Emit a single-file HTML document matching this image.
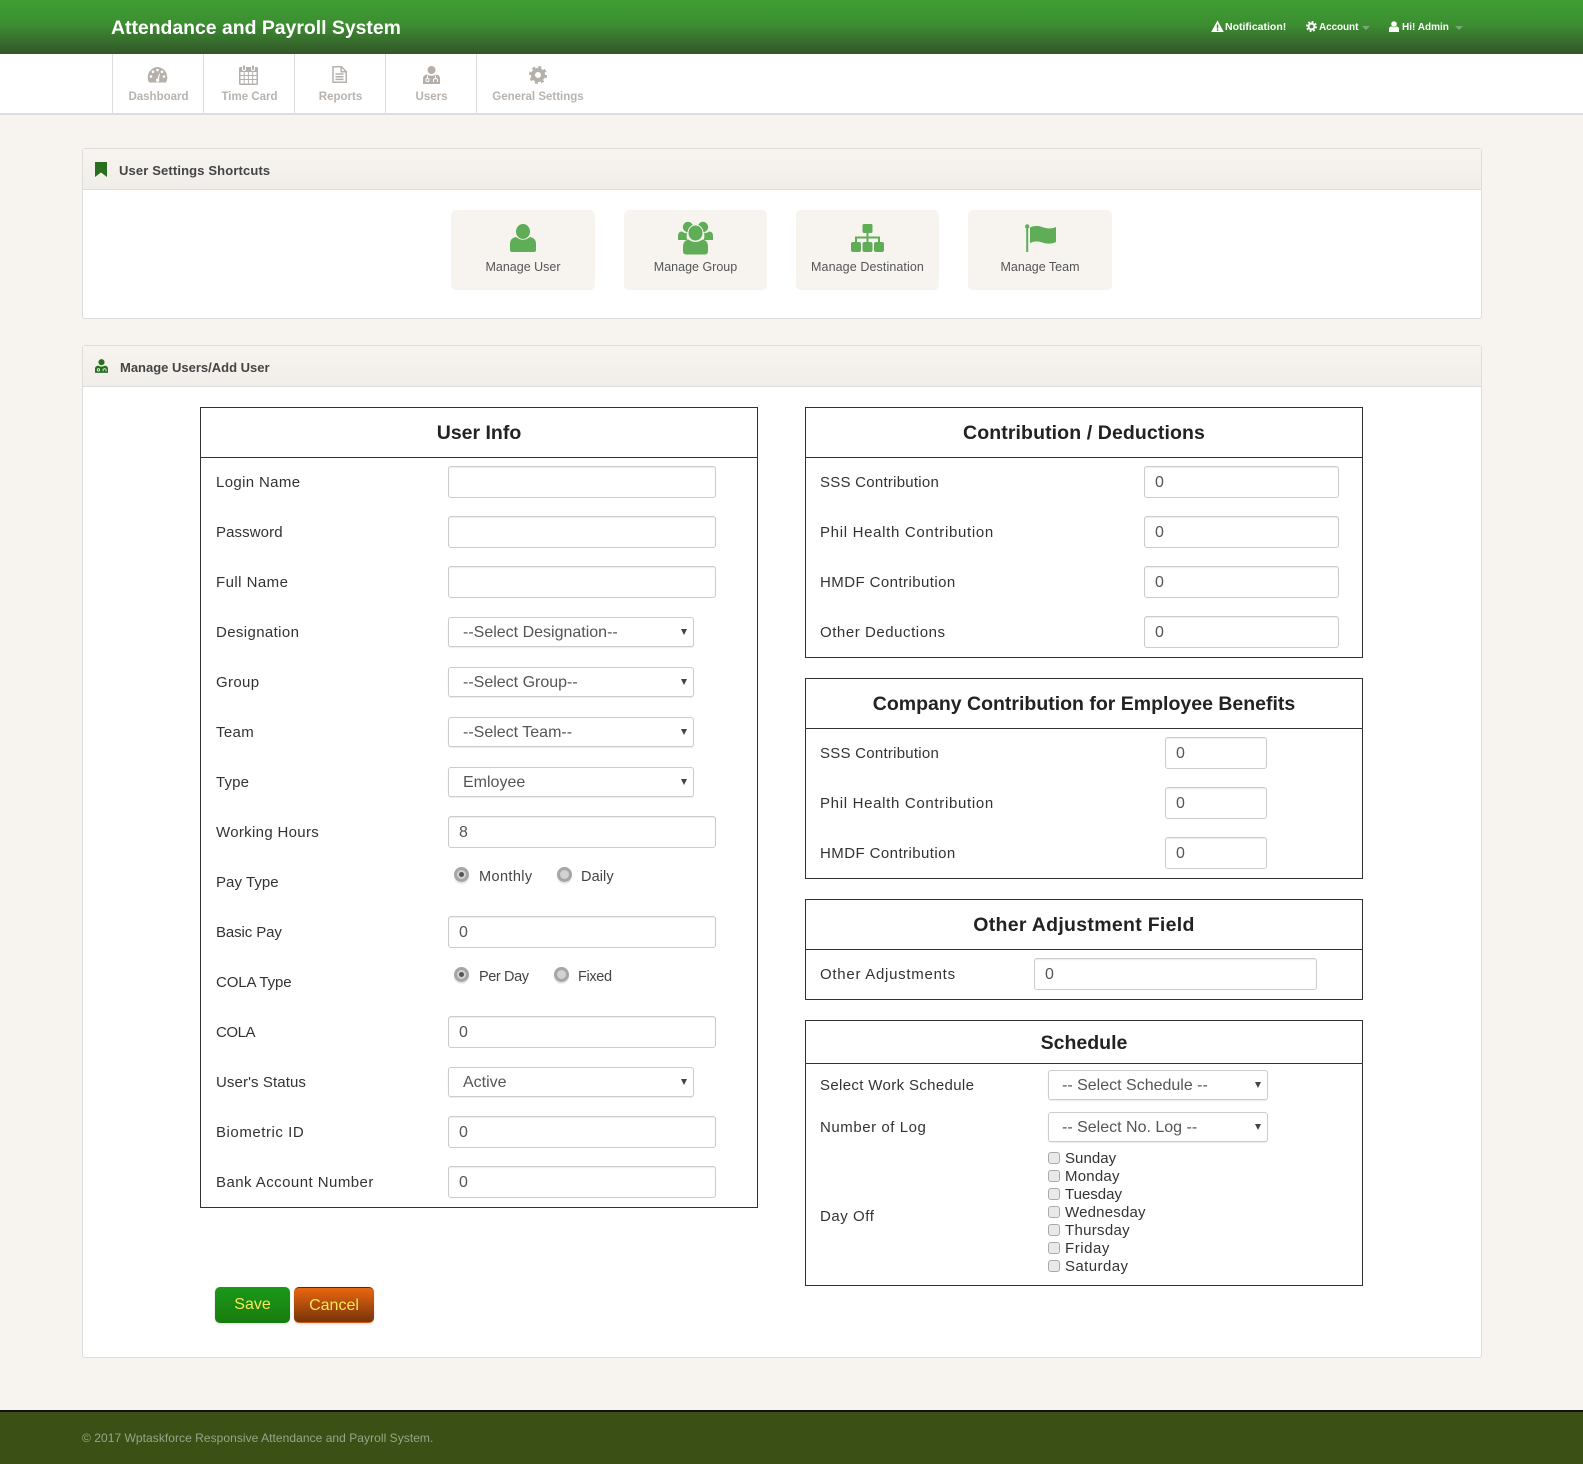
<!DOCTYPE html>
<html><head><meta charset="utf-8"><title>Attendance and Payroll System</title>
<style>
*{box-sizing:border-box}
html,body{margin:0;padding:0}
body{width:1583px;height:1464px;position:relative;overflow:hidden;background:#f7f4f0;font-family:"Liberation Sans",sans-serif;color:#333}
.a{position:absolute}
.hd{left:0;top:0;width:1583px;height:54px;background:linear-gradient(#3f9f33,#3c8e31 45%,#33552a)}
.title{left:111px;top:13px;line-height:30px;font-size:19.4px;font-weight:bold;color:#fff;white-space:nowrap}
.tn{top:17px;line-height:20px;font-size:10px;font-weight:bold;color:#fff;white-space:nowrap}
.nav{left:0;top:54px;width:1583px;height:61px;background:#fff;border-bottom:2px solid #ddd}
.sep{top:54px;width:1px;height:60px;background:#ddd}
.nl{top:87px;line-height:20px;font-size:11.5px;font-weight:bold;color:#b8b3ae;text-align:center;width:91px}
.panel{left:82px;width:1400px;background:#fff;border:1px solid #ddd;border-radius:3px}
.ph{left:83px;width:1398px;background:linear-gradient(#f7f4f0,#f1eeea);border-bottom:1px solid #ddd}
.pt{line-height:20px;font-size:13px;font-weight:bold;color:#444;white-space:nowrap}
.tile{top:210px;height:80px;background:#f7f4f0;border-radius:5px}
.tl{top:257px;line-height:20px;font-size:12.5px;color:#555;text-align:center;white-space:nowrap}
.box{background:#fff;border:1px solid #333}
.bl{height:1px;background:#333}
.bt{line-height:30px;font-size:19.5px;color:#222;text-align:center;font-weight:bold;white-space:nowrap}
.l{line-height:20px;font-size:15px;color:#333;white-space:nowrap;margin-top:1px}
input.i{position:absolute;height:32px;border:1px solid #ccc;border-radius:3px;background:#fff;box-shadow:inset 0 1px 1px rgba(0,0,0,.075);padding:2px 10px 0;font:16px "Liberation Sans",sans-serif;color:#555;margin:0;outline:0}
select.s{position:absolute;height:30px;border:1px solid #ccc;border-radius:3px;background:#fff;padding:0 0 0 14px;font:16px "Liberation Sans",sans-serif;color:#555;margin:0;outline:0;box-shadow:0 1px 1px rgba(0,0,0,.08);appearance:none;-webkit-appearance:none}
select.t{padding-left:13px}
.ar{width:6px;height:6px;background:#444;clip-path:polygon(0 0,100% 0,50% 100%);margin-top:1px}
.r{width:15px;height:15px;border-radius:50%;background:#d2d2d2;border:3px solid #a6a6a6;box-shadow:0 2px 1px #e4e4e4}
.r.on:after{content:"";position:absolute;left:2px;top:2px;width:5px;height:5px;border-radius:50%;background:#555}
.rl{font-size:14.5px;color:#444}
.c{left:1048px;width:12px;height:12px;border-radius:3px;background:#e9e9e9;border:1px solid #aaa}
.btn{top:1287px;height:36px;border-radius:5px;line-height:35px;text-align:center;font-size:16px;color:#f6e85a;box-shadow:0 1px 2px rgba(0,0,0,.15)}
.ft{left:0;top:1410px;width:1583px;height:54px;background:#3a5014;border-top:2px solid #111}
.ftt{left:82px;top:1428px;line-height:20px;font-size:12px;color:#98a48a;white-space:nowrap;letter-spacing:.05px}
svg{position:absolute;display:block}
</style></head><body>

<div class="a hd"></div>
<div class="a title">Attendance and Payroll System</div>

<svg style="left:1211px;top:20px" width="13" height="13" viewBox="0 0 13 13"><path fill="#fff" d="M6.5 .5 L12.8 12 H.2 Z"/><rect x="5.8" y="4.5" width="1.5" height="4" fill="#3a8a30"/><rect x="5.8" y="9.3" width="1.5" height="1.5" fill="#3a8a30"/></svg>
<div class="a tn" style="left:1225px;font-size:10.5px">Notification!</div>
<svg style="left:1306px;top:21px" width="11" height="11" viewBox="0 0 12 12"><circle cx="6" cy="6" r="3.2" fill="none" stroke="#fff" stroke-width="2.2"/><circle cx="6" cy="6" r="5" fill="none" stroke="#fff" stroke-width="2" stroke-dasharray="2 1.93"/></svg>
<div class="a tn" style="left:1319px;top:17.5px;letter-spacing:-.1px">Account</div>
<svg style="left:1362px;top:26px" width="8" height="4"><path d="M0 0H8L4 4Z" fill="#7fa67a"/></svg>
<svg style="left:1389px;top:21px" width="10" height="11" viewBox="0 0 10 11"><circle cx="5" cy="3" r="2.8" fill="#fff"/><path fill="#fff" d="M0 11V8Q0 5.8 2.2 5.4 5 7.2 7.8 5.4 10 5.8 10 8V11Z"/></svg>
<div class="a tn" style="left:1402px;top:17.5px">Hi! Admin</div>
<svg style="left:1455px;top:26px" width="8" height="4"><path d="M0 0H8L4 4Z" fill="#7fa67a"/></svg>

<div class="a nav"></div>
<div class="a sep" style="left:112px"></div>
<div class="a sep" style="left:203px"></div>
<div class="a sep" style="left:294px"></div>
<div class="a sep" style="left:385px"></div>
<div class="a sep" style="left:476px"></div>

<svg style="left:147px;top:67px" width="21" height="16" viewBox="0 0 21 16"><path fill="#b5b0ab" d="M10.5 0A10.5 10.5 0 0 0 2 15.5H19A10.5 10.5 0 0 0 10.5 0Z"/><g fill="#fff"><circle cx="4" cy="9.5" r="1.3"/><circle cx="6" cy="4.8" r="1.3"/><circle cx="10.5" cy="3" r="1.3"/><circle cx="15" cy="4.8" r="1.3"/><circle cx="17" cy="9.5" r="1.3"/><path d="M10 13L12.3 6.5 12.9 6.7 11.8 13.4Z"/><circle cx="10.6" cy="13.3" r="1.7"/></g></svg>
<svg style="left:239px;top:65px" width="19" height="20" viewBox="0 0 19 20"><rect x="0" y="2" width="19" height="18" rx="1.5" fill="#b5b0ab"/><rect x="1.5" y="7" width="16" height="11.5" fill="#fff"/><g fill="#b5b0ab"><rect x="4.7" y="7" width="1" height="12"/><rect x="8.9" y="7" width="1" height="12"/><rect x="13.2" y="7" width="1" height="12"/><rect x="1" y="10" width="17" height="1"/><rect x="1" y="14" width="17" height="1"/></g><rect x="3.5" y="0" width="3" height="5.5" rx="1.2" fill="#b5b0ab" stroke="#fff"/><rect x="12.5" y="0" width="3" height="5.5" rx="1.2" fill="#b5b0ab" stroke="#fff"/></svg>
<svg style="left:332px;top:66px" width="15" height="17" viewBox="0 0 15 17"><path fill="none" stroke="#b5b0ab" stroke-width="1.5" d="M1 .8H9.5L14.2 5.5V16.2H1Z"/><path fill="none" stroke="#b5b0ab" stroke-width="1.5" d="M9.2 1V5.8H14M3.5 8H11.5M3.5 10.7H11.5M3.5 13.4H11.5"/></svg>
<svg style="left:423px;top:66px" width="17" height="18" viewBox="0 0 17 18"><circle cx="8.5" cy="4" r="4" fill="#b5b0ab"/><path fill="#b5b0ab" d="M0 18V12.5Q0 9 4 8.5 8.5 11 13 8.5 17 9 17 12.5V18Z"/><path fill="none" stroke="#fff" stroke-width="1" d="M4.5 9.5V12M12.5 9.5V12"/><circle cx="4.5" cy="14" r="1.6" fill="none" stroke="#fff"/><path fill="none" stroke="#fff" d="M10.5 16V13.5Q12.5 11.5 14.5 13.5V16"/></svg>
<svg style="left:529px;top:66px" width="18" height="18" viewBox="0 0 18 18"><circle cx="9" cy="9" r="5" fill="none" stroke="#b5b0ab" stroke-width="4"/><circle cx="9" cy="9" r="7.6" fill="none" stroke="#b5b0ab" stroke-width="2.8" stroke-dasharray="3 2.97"/></svg>

<div class="a nl" style="left:113px">Dashboard</div>
<div class="a nl" style="left:204px">Time Card</div>
<div class="a nl" style="left:295px">Reports</div>
<div class="a nl" style="left:386px">Users</div>
<div class="a nl" style="left:477px;width:122px">General Settings</div>

<div class="a panel" style="top:148px;height:171px"></div>
<div class="a ph" style="top:149px;height:41px"></div>
<svg style="left:95px;top:162px" width="12" height="15" viewBox="0 0 12 15"><path fill="#2a6f20" d="M0 0H12V15L6 10.5 0 15Z"/></svg>
<div class="a pt" style="left:119px;top:161px;letter-spacing:.14px">User Settings Shortcuts</div>

<div class="a tile" style="left:451px;width:144px"></div>
<div class="a tile" style="left:624px;width:143px"></div>
<div class="a tile" style="left:796px;width:143px"></div>
<div class="a tile" style="left:968px;width:144px"></div>

<svg style="left:510px;top:224px" width="26" height="28" viewBox="0 0 26 28"><ellipse cx="13" cy="7.5" rx="7" ry="7.5" fill="#5fad56"/><path fill="#5fad56" d="M0 26V20Q0 14 6 13 13 18.5 20 13 26 14 26 20V26Q26 28 24 28H2Q0 28 0 26Z"/></svg>
<svg style="left:678px;top:221px" width="35" height="34" viewBox="0 0 35 34"><circle cx="10" cy="6" r="5.2" fill="#5fad56"/><circle cx="25" cy="6" r="5.2" fill="#5fad56"/><path fill="#5fad56" d="M0 19V15Q0 10.5 4 10.5 7 13 9 11.5 8 16 9.5 19Z M35 19V15Q35 10.5 31 10.5 28 13 26 11.5 27 16 25.5 19Z"/><ellipse cx="17.5" cy="12" rx="7.5" ry="8" fill="#5fad56" stroke="#f7f4f0" stroke-width="1"/><path fill="#5fad56" d="M5 30V26Q5 19.5 10.5 18.5 17.5 23.5 24.5 18.5 30 19.5 30 26V30Q30 33.5 27 33.5H8Q5 33.5 5 30Z"/></svg>
<svg style="left:851px;top:224px" width="33" height="28" viewBox="0 0 33 28"><rect x="11.5" y="0" width="10" height="9" rx="1.5" fill="#5fad56"/><path fill="none" stroke="#5fad56" stroke-width="2" d="M16.5 8V18M5 18V13.5H28V18"/><rect x="0" y="18" width="10" height="10" rx="2" fill="#5fad56"/><rect x="11.5" y="18" width="10" height="10" rx="2" fill="#5fad56"/><rect x="23" y="18" width="10" height="10" rx="2" fill="#5fad56"/></svg>
<svg style="left:1025px;top:224px" width="32" height="28" viewBox="0 0 32 28"><rect x="1.2" y="2" width="2" height="26" fill="#5fad56"/><circle cx="2.2" cy="2.5" r="2.2" fill="#5fad56"/><path fill="#5fad56" d="M5 3.5Q11 .5 17 3 25 6 31 3V18Q25 21 17 18.5 11 16 5 19Z"/></svg>

<div class="a tl" style="left:451px;width:144px">Manage User</div>
<div class="a tl" style="left:624px;width:143px">Manage Group</div>
<div class="a tl" style="left:796px;width:143px;letter-spacing:.1px">Manage Destination</div>
<div class="a tl" style="left:968px;width:144px">Manage Team</div>

<div class="a panel" style="top:345px;height:1013px"></div>
<div class="a ph" style="top:346px;height:41px"></div>
<svg style="left:95px;top:359px" width="13" height="14" viewBox="0 0 17 18"><circle cx="8.5" cy="4" r="4" fill="#2a6f20"/><path fill="#2a6f20" d="M0 18V12.5Q0 9 4 8.5 8.5 11 13 8.5 17 9 17 12.5V18Z"/><circle cx="4.5" cy="14" r="1.6" fill="none" stroke="#fff"/><path fill="none" stroke="#fff" d="M10.5 16V13.5Q12.5 11.5 14.5 13.5V16"/></svg>
<div class="a pt" style="left:120px;top:358px">Manage Users/Add User</div>

<!-- User Info -->
<div class="a box" style="left:200px;top:407px;width:558px;height:801px"></div>
<div class="a bl" style="left:200px;top:457px;width:558px"></div>
<div class="a bt" style="left:200px;top:418px;width:558px">User Info</div>

<div class="a l" style="left:216px;top:472px;letter-spacing:.35px">Login Name</div>
<input class="i" style="left:448px;top:466px;width:268px" value="">
<div class="a l" style="left:216px;top:522px;letter-spacing:.1px">Password</div>
<input class="i" style="left:448px;top:516px;width:268px" value="">
<div class="a l" style="left:216px;top:572px;letter-spacing:.45px">Full Name</div>
<input class="i" style="left:448px;top:566px;width:268px" value="">
<div class="a l" style="left:216px;top:622px;letter-spacing:.37px">Designation</div>
<select class="s" style="left:448px;top:617px;width:246px"><option>--Select Designation--</option></select><div class="a ar" style="left:681px;top:628px"></div>
<div class="a l" style="left:216px;top:672px;letter-spacing:.35px">Group</div>
<select class="s" style="left:448px;top:667px;width:246px"><option>--Select Group--</option></select><div class="a ar" style="left:681px;top:678px"></div>
<div class="a l" style="left:216px;top:722px;letter-spacing:.35px">Team</div>
<select class="s" style="left:448px;top:717px;width:246px"><option>--Select Team--</option></select><div class="a ar" style="left:681px;top:728px"></div>
<div class="a l" style="left:216px;top:772px;letter-spacing:.15px">Type</div>
<select class="s" style="left:448px;top:767px;width:246px"><option>Emloyee</option></select><div class="a ar" style="left:681px;top:778px"></div>
<div class="a l" style="left:216px;top:822px;letter-spacing:.32px">Working Hours</div>
<input class="i" style="left:448px;top:816px;width:268px" value="8">
<div class="a l" style="left:216px;top:872px;letter-spacing:.05px">Pay Type</div>
<div class="a r on" style="left:454px;top:867px"></div>
<div class="a l rl" style="left:479px;top:866px;letter-spacing:.4px">Monthly</div>
<div class="a r" style="left:557px;top:867px"></div>
<div class="a l rl" style="left:581px;top:866px;letter-spacing:.1px">Daily</div>
<div class="a l" style="left:216px;top:922px;letter-spacing:-.1px">Basic Pay</div>
<input class="i" style="left:448px;top:916px;width:268px" value="0">
<div class="a l" style="left:216px;top:972px;letter-spacing:-.1px">COLA Type</div>
<div class="a r on" style="left:454px;top:967px"></div>
<div class="a l rl" style="left:479px;top:966px;letter-spacing:-.4px">Per Day</div>
<div class="a r" style="left:554px;top:967px"></div>
<div class="a l rl" style="left:578px;top:966px;letter-spacing:-.35px">Fixed</div>
<div class="a l" style="left:216px;top:1022px;letter-spacing:-.45px">COLA</div>
<input class="i" style="left:448px;top:1016px;width:268px" value="0">
<div class="a l" style="left:216px;top:1072px;letter-spacing:.1px">User's Status</div>
<select class="s" style="left:448px;top:1067px;width:246px"><option>Active</option></select><div class="a ar" style="left:681px;top:1078px"></div>
<div class="a l" style="left:216px;top:1122px;letter-spacing:.55px">Biometric ID</div>
<input class="i" style="left:448px;top:1116px;width:268px" value="0">
<div class="a l" style="left:216px;top:1172px;letter-spacing:.45px">Bank Account Number</div>
<input class="i" style="left:448px;top:1166px;width:268px" value="0">

<!-- Contribution -->
<div class="a box" style="left:805px;top:407px;width:558px;height:251px"></div>
<div class="a bl" style="left:805px;top:457px;width:558px"></div>
<div class="a bt" style="left:805px;top:418px;width:558px;letter-spacing:.1px">Contribution / Deductions</div>
<div class="a l" style="left:820px;top:472px;letter-spacing:.25px">SSS Contribution</div>
<input class="i" style="left:1144px;top:466px;width:195px" value="0">
<div class="a l" style="left:820px;top:522px;letter-spacing:.68px">Phil Health Contribution</div>
<input class="i" style="left:1144px;top:516px;width:195px" value="0">
<div class="a l" style="left:820px;top:572px;letter-spacing:.43px">HMDF Contribution</div>
<input class="i" style="left:1144px;top:566px;width:195px" value="0">
<div class="a l" style="left:820px;top:622px;letter-spacing:.55px">Other Deductions</div>
<input class="i" style="left:1144px;top:616px;width:195px" value="0">

<!-- Company -->
<div class="a box" style="left:805px;top:678px;width:558px;height:201px"></div>
<div class="a bl" style="left:805px;top:728px;width:558px"></div>
<div class="a bt" style="left:805px;top:689px;width:558px">Company Contribution for Employee Benefits</div>
<div class="a l" style="left:820px;top:743px;letter-spacing:.25px">SSS Contribution</div>
<input class="i" style="left:1165px;top:737px;width:102px" value="0">
<div class="a l" style="left:820px;top:793px;letter-spacing:.68px">Phil Health Contribution</div>
<input class="i" style="left:1165px;top:787px;width:102px" value="0">
<div class="a l" style="left:820px;top:843px;letter-spacing:.43px">HMDF Contribution</div>
<input class="i" style="left:1165px;top:837px;width:102px" value="0">

<!-- Other -->
<div class="a box" style="left:805px;top:899px;width:558px;height:101px"></div>
<div class="a bl" style="left:805px;top:949px;width:558px"></div>
<div class="a bt" style="left:805px;top:910px;width:558px;letter-spacing:.3px">Other Adjustment Field</div>
<div class="a l" style="left:820px;top:964px;letter-spacing:.73px">Other Adjustments</div>
<input class="i" style="left:1034px;top:958px;width:283px" value="0">

<!-- Schedule -->
<div class="a box" style="left:805px;top:1020px;width:558px;height:266px"></div>
<div class="a bl" style="left:805px;top:1063px;width:558px"></div>
<div class="a bt" style="left:805px;top:1028px;width:558px">Schedule</div>
<div class="a l" style="left:820px;top:1075px;letter-spacing:.35px">Select Work Schedule</div>
<select class="s t" style="left:1048px;top:1070px;width:220px"><option>-- Select Schedule --</option></select><div class="a ar" style="left:1255px;top:1081px"></div>
<div class="a l" style="left:820px;top:1117px;letter-spacing:.55px">Number of Log</div>
<select class="s t" style="left:1048px;top:1112px;width:220px"><option>-- Select No. Log --</option></select><div class="a ar" style="left:1255px;top:1123px"></div>
<div class="a l" style="left:820px;top:1206px;letter-spacing:.55px">Day Off</div>

<div class="a c" style="top:1152px"></div><div class="a l" style="left:1065px;top:1148px;letter-spacing:.05px">Sunday</div>
<div class="a c" style="top:1170px"></div><div class="a l" style="left:1065px;top:1166px;letter-spacing:.22px">Monday</div>
<div class="a c" style="top:1188px"></div><div class="a l" style="left:1065px;top:1184px;letter-spacing:0">Tuesday</div>
<div class="a c" style="top:1206px"></div><div class="a l" style="left:1065px;top:1202px;letter-spacing:.2px">Wednesday</div>
<div class="a c" style="top:1224px"></div><div class="a l" style="left:1065px;top:1220px;letter-spacing:.3px">Thursday</div>
<div class="a c" style="top:1242px"></div><div class="a l" style="left:1065px;top:1238px;letter-spacing:.55px">Friday</div>
<div class="a c" style="top:1260px"></div><div class="a l" style="left:1065px;top:1256px;letter-spacing:.42px">Saturday</div>

<div class="a btn" style="left:215px;width:75px;background:linear-gradient(#1b981a,#187c0e)">Save</div>
<div class="a btn" style="left:294px;width:80px;background:linear-gradient(#ea660f,#76340a);border-top:1px solid #5a2a08;border-bottom:1px solid #d05a10">Cancel</div>

<div class="a ft"></div>
<div class="a ftt">© 2017 Wptaskforce Responsive Attendance and Payroll System.</div>
</body></html>
